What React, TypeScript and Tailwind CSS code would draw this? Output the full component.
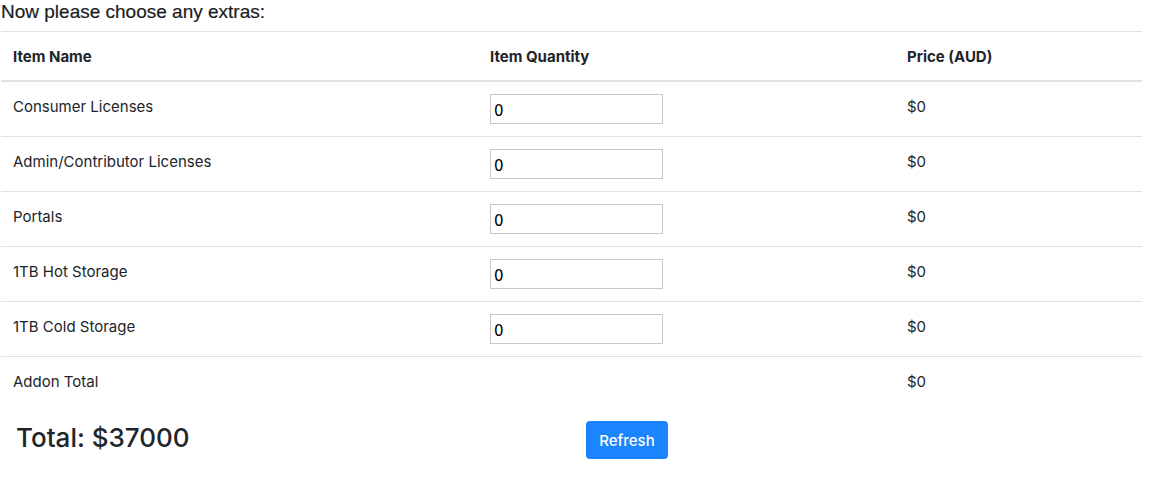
import React from 'react';

const items = [
  'Consumer Licenses',
  'Admin/Contributor Licenses',
  'Portals',
  '1TB Hot Storage',
  '1TB Cold Storage',
];

const App: React.FC = () => {
  return (
    <div className="w-[1150px] h-[500px] bg-white text-[#212529] font-['Inter','Noto_Sans',sans-serif]">
      <h3 className="h-[31px] pl-[1px] pt-[1px] text-[19px] leading-[22px] font-['Liberation_Sans',Arial,sans-serif] text-[#1c1c1c] [-webkit-text-stroke:0.2px_#1c1c1c]">
        Now please choose any extras:
      </h3>
      <table className="w-[1141px] ml-[1px] border-collapse text-[15px] table-fixed">
        <colgroup>
          <col className="w-[477px]" />
          <col className="w-[417px]" />
          <col className="w-[247px]" />
        </colgroup>
        <thead>
          <tr className="border-t border-[#dee2e6] border-b-2">
            <th className="text-left font-bold px-3 pt-[13px] pb-[11px] h-[49px] leading-6">Item Name</th>
            <th className="text-left font-bold px-3 pt-[13px] pb-[11px] leading-6">Item Quantity</th>
            <th className="text-left font-bold px-3 pt-[13px] pb-[11px] leading-6">Price (AUD)</th>
          </tr>
        </thead>
        <tbody>
          {items.map((name) => (
            <tr key={name} className="border-b border-[#dee2e6]">
              <td className="px-3 pt-[13px] pb-[10px] h-[54px] align-top leading-6">{name}</td>
              <td className="px-3 py-3 align-top">
                <input
                  type="text"
                  defaultValue="0"
                  className="w-[173px] h-[30px] border border-[#c8c8c8] px-[3px] pt-[3px] text-[15px] text-black font-['DejaVu_Sans',sans-serif] outline-none"
                />
              </td>
              <td className="px-3 pt-[13px] pb-[10px] align-top leading-6">$0</td>
            </tr>
          ))}
          <tr>
            <td className="px-3 pt-[13px] pb-[10px] h-[54px] align-top leading-6">Addon Total</td>
            <td className="px-3"></td>
            <td className="px-3 pt-[13px] pb-[10px] align-top leading-6">$0</td>
          </tr>
        </tbody>
      </table>
      <div className="flex items-center h-[38px] mt-[10px]">
        <div className="w-[586px] pl-[16px] text-[26px] font-medium leading-8 pb-[3px]">Total: $37000</div>
        <button className="w-[82px] h-[38px] rounded bg-[#1a85ff] text-white text-[15px] font-medium pt-[3px]">
          Refresh
        </button>
      </div>
    </div>
  );
};

export default App;
